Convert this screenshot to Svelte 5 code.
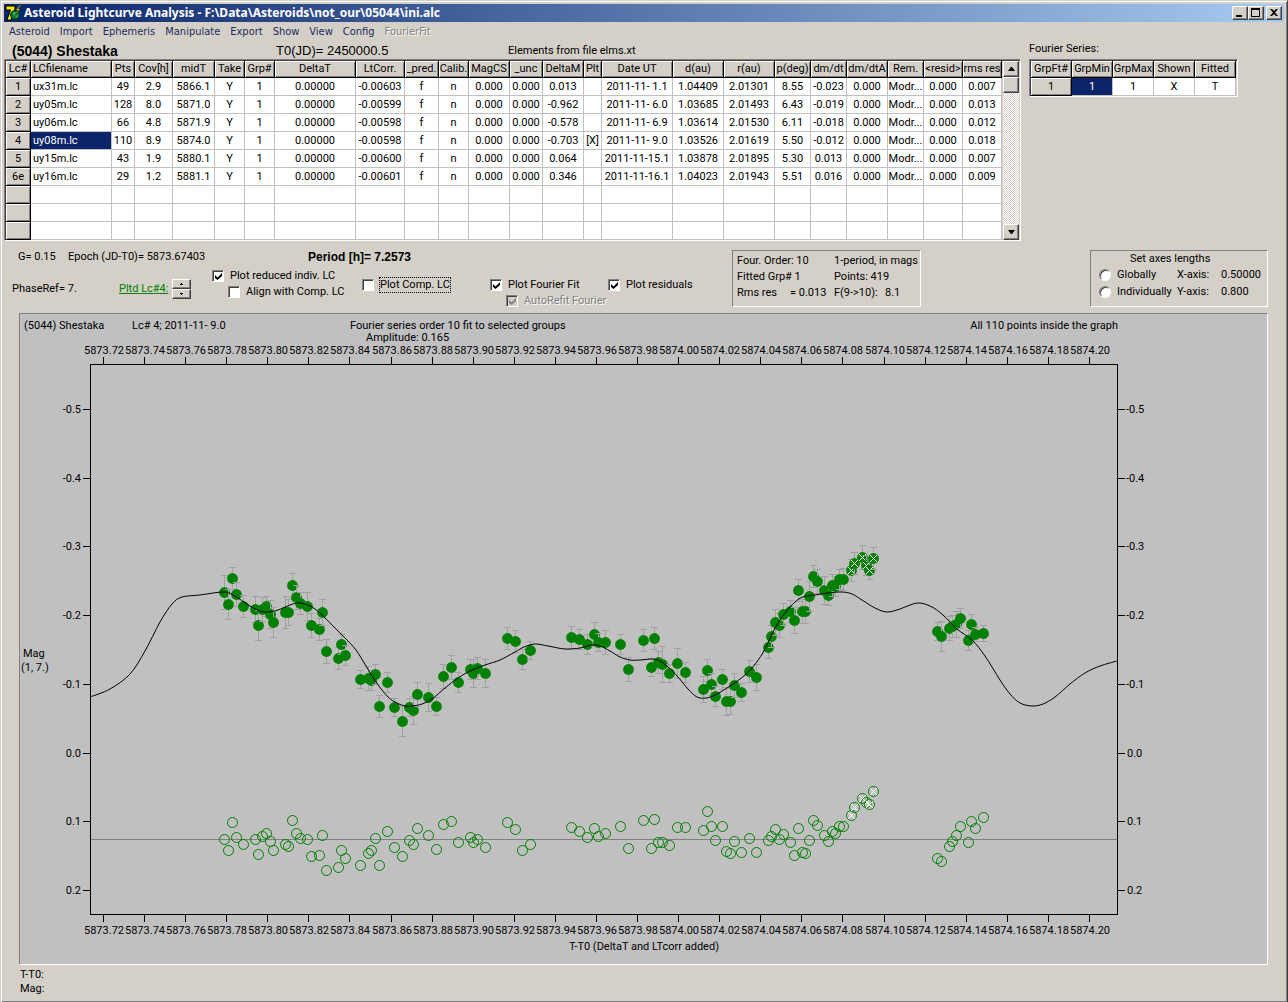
<script lang="ts">
  const menu = ['Asteroid', 'Import', 'Ephemeris', 'Manipulate', 'Export', 'Show', 'View', 'Config'];

  const columns: [string, number][] = [
    ['Lc#', 25], ['LCfilename', 81], ['Pts', 23], ['Cov[h]', 38], ['midT', 42], ['Take', 30],
    ['Grp#', 30], ['DeltaT', 81], ['LtCorr.', 49], ['_pred.', 34], ['Calib.', 30], ['MagCS', 41],
    ['_unc', 33], ['DeltaM', 41], ['Plt', 18], ['Date UT', 71], ['d(au)', 51], ['r(au)', 51],
    ['p(deg)', 36], ['dm/dt', 36], ['dm/dtA', 41], ['Rem.', 36], ['<resid>', 39], ['rms res', 39],
  ];

  const rows = [
    ['1', 'ux31m.lc', '49', '2.9', '5866.1', 'Y', '1', '0.00000', '-0.00603', 'f', 'n', '0.000', '0.000', '0.013', '', '2011-11- 1.1', '1.04409', '2.01301', '8.55', '-0.023', '0.000', 'Modr...', '0.000', '0.007'],
    ['2', 'uy05m.lc', '128', '8.0', '5871.0', 'Y', '1', '0.00000', '-0.00599', 'f', 'n', '0.000', '0.000', '-0.962', '', '2011-11- 6.0', '1.03685', '2.01493', '6.43', '-0.019', '0.000', 'Modr...', '0.000', '0.013'],
    ['3', 'uy06m.lc', '66', '4.8', '5871.9', 'Y', '1', '0.00000', '-0.00598', 'f', 'n', '0.000', '0.000', '-0.578', '', '2011-11- 6.9', '1.03614', '2.01530', '6.11', '-0.018', '0.000', 'Modr...', '0.000', '0.012'],
    ['4', 'uy08m.lc', '110', '8.9', '5874.0', 'Y', '1', '0.00000', '-0.00598', 'f', 'n', '0.000', '0.000', '-0.703', '[X]', '2011-11- 9.0', '1.03526', '2.01619', '5.50', '-0.012', '0.000', 'Modr...', '0.000', '0.018'],
    ['5', 'uy15m.lc', '43', '1.9', '5880.1', 'Y', '1', '0.00000', '-0.00600', 'f', 'n', '0.000', '0.000', '0.064', '', '2011-11-15.1', '1.03878', '2.01895', '5.30', '0.013', '0.000', 'Modr...', '0.000', '0.007'],
    ['6e', 'uy16m.lc', '29', '1.2', '5881.1', 'Y', '1', '0.00000', '-0.00601', 'f', 'n', '0.000', '0.000', '0.346', '', '2011-11-16.1', '1.04023', '2.01943', '5.51', '0.016', '0.000', 'Modr...', '0.000', '0.009'],
    ...Array.from({ length: 3 }, () => Array(24).fill('')),
  ];

  const fourierCols = ['GrpFt#', 'GrpMin', 'GrpMax', 'Shown', 'Fitted'];
  const fourierRow = ['1', '1', '1', 'X', 'T'];

  // x, magnitude y, error bar, residual y, 1 = rejected
  const points = [
    [224, 592, 17, 839], [228, 604, 15, 850], [232, 578, 11, 822], [236, 594, 12, 837], [243, 606, 11, 844],
    [255, 609, 13, 839], [258, 625, 15, 854], [262, 609, 12, 836], [266, 606, 10, 833], [270, 614, 14, 841],
    [273, 622, 15, 850], [285, 612, 16, 844], [288, 612, 13, 846], [292, 585, 12, 820], [296, 597, 12, 833],
    [300, 603, 11, 838], [307, 606, 14, 839], [311, 625, 12, 856], [319, 629, 11, 855], [322, 612, 13, 835],
    [326, 651, 12, 870], [338, 658, 11, 867], [341, 644, 10, 850], [345, 655, 10, 858], [360, 679, 9, 865],
    [368, 678, 12, 853], [371, 680, 10, 850], [375, 674, 10, 838], [379, 706, 11, 865], [387, 682, 10, 831],
    [394, 707, 9, 847], [402, 721, 15, 856], [409, 707, 9, 840], [413, 710, 14, 844], [417, 694, 12, 828],
    [428, 697, 14, 835], [436, 706, 9, 849], [443, 676, 12, 824], [451, 667, 12, 821], [458, 682, 10, 842],
    [470, 669, 10, 837], [473, 673, 14, 842], [477, 668, 11, 839], [485, 673, 14, 847], [507, 638, 11, 822],
    [515, 641, 11, 829], [522, 659, 10, 850], [530, 650, 9, 844], [571, 637, 11, 827], [579, 639, 10, 831],
    [587, 644, 10, 837], [594, 634, 12, 828], [598, 642, 9, 836], [605, 642, 12, 833], [620, 644, 10, 826],
    [628, 669, 12, 848], [643, 640, 11, 820], [651, 667, 9, 848], [654, 638, 11, 819], [658, 662, 11, 842],
    [662, 664, 18, 842], [669, 673, 9, 845], [677, 663, 15, 827], [685, 672, 10, 827], [703, 689, 13, 830],
    [707, 670, 11, 811], [711, 684, 11, 826], [715, 696, 10, 840], [722, 679, 10, 826], [726, 701, 14, 851],
    [730, 701, 13, 853], [734, 685, 12, 841], [741, 692, 9, 852], [749, 671, 11, 838], [756, 677, 13, 852],
    [768, 647, 11, 840], [771, 636, 11, 836], [775, 622, 13, 829], [779, 625, 12, 839], [783, 614, 11, 834],
    [790, 611, 11, 842], [794, 620, 13, 855], [798, 590, 11, 828], [802, 611, 12, 852], [805, 611, 12, 853],
    [809, 596, 15, 840], [813, 576, 11, 820], [817, 581, 12, 825], [824, 590, 14, 835], [828, 595, 10, 841],
    [832, 585, 11, 831], [835, 586, 10, 833], [839, 579, 10, 826], [843, 579, 11, 826], [851, 570, 11, 815, 1],
    [854, 563, 11, 807, 1], [862, 557, 12, 798, 1], [866, 565, 10, 802, 1], [869, 570, 9, 804, 1], [873, 558, 11, 791, 1],
    [937, 631, 9, 858], [941, 636, 15, 861], [949, 628, 12, 846], [952, 626, 11, 841], [956, 624, 13, 835],
    [960, 618, 10, 826], [968, 640, 10, 842], [971, 624, 10, 821], [975, 634, 7, 828], [983, 633, 8, 817],
  ];

  const fit = [
    [90, 697], [110, 689], [130, 674], [145, 651], [160, 622], [172, 604], [182, 597], [200, 595], [223, 592],
    [233, 595], [250, 606], [260, 611], [268, 612], [278, 610], [290, 605], [299, 603], [310, 606], [320, 613],
    [333, 626], [345, 638], [356, 650], [366, 666], [376, 682], [388, 697], [397, 703], [405, 706], [412, 706],
    [422, 704], [432, 699], [445, 688], [458, 678], [470, 671], [485, 665], [500, 660], [515, 652], [524, 647],
    [535, 644], [548, 646], [565, 649], [580, 648], [592, 645], [600, 646], [610, 651], [620, 657], [630, 660],
    [640, 660], [652, 659], [660, 661], [668, 667], [678, 677], [688, 689], [697, 697], [706, 698], [715, 695],
    [730, 686], [745, 675], [756, 663], [765, 649], [775, 628], [785, 613], [795, 602], [803, 597], [815, 595],
    [828, 593], [842, 592], [852, 594], [862, 600], [875, 608], [887, 612], [900, 609], [910, 605], [920, 603],
    [932, 607], [943, 615], [957, 629], [972, 640], [985, 656], [1000, 680], [1010, 694], [1020, 703],
    [1032, 706], [1043, 704], [1055, 697], [1070, 684], [1085, 673], [1100, 666], [1117, 661],
  ];

  function smooth(p: number[][]) {
    let d = `M${p[0]}`;
    for (let i = 0; i < p.length - 1; i++) {
      const a = p[i - 1] ?? p[i];
      const b = p[i];
      const c = p[i + 1];
      const e = p[i + 2] ?? c;
      d += `C${b[0] + (c[0] - a[0]) / 6},${b[1] + (c[1] - a[1]) / 6} ${c[0] - (e[0] - b[0]) / 6},${c[1] - (e[1] - b[1]) / 6} ${c}`;
    }
    return d;
  }

  const xTicks = Array.from({ length: 25 }, (_, i) => ({
    x: Math.round(103 + i * 41.08) + 0.5,
    label: (5873.72 + i * 0.02).toFixed(2),
  }));
  const yTicks = Array.from({ length: 8 }, (_, i) => ({
    y: Math.round(409 + i * 68.7) + 0.5,
    label: ((i - 5) / 10).toFixed(1),
  }));

  let plotReduced = $state(true);
  let alignComp = $state(false);
  let plotComp = $state(false);
  let plotFit = $state(true);
  let plotResiduals = $state(true);
  let axes = $state('');
</script>

<div class="window">
  <header class="titlebar">
    <svg class="logo" width="16" height="16" viewBox="0 0 16 16" aria-hidden="true">
      <path d="M1 1h9v3L6 15H2L5.500 5H1z" fill="#ffe800" stroke="#000" />
      <circle cx="10" cy="10" r="4.500" fill="#087830" stroke="#002800" />
      <path d="M8 8l2-1 1 2-2 2zM11 11l2-1-1 3z" fill="#48c878" />
      <path d="M15 0l-4 5h2l-3 5 5-6h-2l3-4z" fill="#f8f020" stroke="#304000" stroke-width=".5" />
    </svg>
    <h1>Asteroid Lightcurve Analysis - F:\Data\Asteroids\not_our\05044\ini.alc</h1>
    <div class="window-buttons">
      <button aria-label="Minimize"><svg width="12" height="10"><path d="M2 7h6v2H2z" /></svg></button>
      <button aria-label="Maximize"><svg width="12" height="10"><path d="M1 0h9v9H1zM2 2v6h7V2z" fill-rule="evenodd" /></svg></button>
      <button class="close" aria-label="Close"><svg width="12" height="10"><path d="M2 1h2l2 2 2-2h2L7 4.500 10 8H8L6 6 4 8H2l3-3.500z" /></svg></button>
    </div>
  </header>

  <nav>
    {#each menu as item}
      <button>{item}</button>
    {/each}
    <button disabled>FourierFit</button>
  </nav>

  <section class="tables">
    <div class="info">
      <strong>(5044) Shestaka</strong>
      <span class="t0">T0(JD)= 2450000.5</span>
      <span>Elements from file elms.xt</span>
    </div>
    <div class="series-title">Fourier Series:</div>

    <div class="grid-frame">
      <table>
        <colgroup>
          {#each columns as [, width]}
            <col style="width: {width}px" />
          {/each}
        </colgroup>
        <thead>
          <tr>
            {#each columns as [name], i}
              <th class:left={i === 1}>{name}</th>
            {/each}
          </tr>
        </thead>
        <tbody>
          {#each rows as row, r}
            <tr>
              {#each row as cell, i}
                {#if i === 0}
                  <th scope="row">{cell}</th>
                {:else}
                  <td class:left={i === 1} class:selected={i === 1 && r === 3}>{cell}</td>
                {/if}
              {/each}
            </tr>
          {/each}
        </tbody>
      </table>
      <div class="scrollbar">
        <button aria-label="Scroll up"><svg width="7" height="4"><path d="M3 0h1l3 4H0z" /></svg></button>
        <div class="thumb"></div>
        <div class="track"></div>
        <button aria-label="Scroll down"><svg width="7" height="4"><path d="M0 0h7L4 4H3z" /></svg></button>
      </div>
    </div>

    <div class="grid-frame">
      <table class="series">
        <thead>
          <tr>
            {#each fourierCols as name}
              <th>{name}</th>
            {/each}
          </tr>
        </thead>
        <tbody>
          <tr>
            {#each fourierRow as cell, i}
              {#if i === 0}
                <th scope="row">{cell}</th>
              {:else}
                <td class:selected={i === 1}>{cell}</td>
              {/if}
            {/each}
          </tr>
        </tbody>
      </table>
    </div>
  </section>

  <section class="controls">
    <div class="period">
      <span class="g">G= 0.15</span>
      <span class="epoch">Epoch (JD-T0)= 5873.67403</span>
      <strong>Period [h]= 7.2573</strong>
    </div>
    <div class="phase">
      <span>PhaseRef= 7.</span>
      <a href="#plot">Pltd Lc#4:</a>
      <div class="spinner">
        <button aria-label="Next lightcurve"><svg width="3" height="2"><path d="M1 0h1v1h1v1H0V1h1z" /></svg></button>
        <button aria-label="Previous lightcurve"><svg width="3" height="2"><path d="M0 0h3v1H2v1H1V1H0z" /></svg></button>
      </div>
    </div>
    <div class="checks first">
      <label><input type="checkbox" bind:checked={plotReduced} />Plot reduced indiv. LC</label>
      <label class="sub"><input type="checkbox" bind:checked={alignComp} />Align with Comp. LC</label>
    </div>
    <div class="checks">
      <label><input type="checkbox" bind:checked={plotComp} /><span class="focused">Plot Comp. LC</span></label>
    </div>
    <div class="checks">
      <label><input type="checkbox" bind:checked={plotFit} />Plot Fourier Fit</label>
      <label class="sub disabled"><input type="checkbox" checked disabled />AutoRefit Fourier</label>
    </div>
    <div class="checks">
      <label><input type="checkbox" bind:checked={plotResiduals} />Plot residuals</label>
    </div>
    <div class="panel stats">
      <span>Four. Order: 10</span><span>1-period, in mags</span>
      <span>Fitted Grp# 1</span><span>Points: 419</span>
      <span class="rms"><span>Rms res</span><span>= 0.013</span></span>
      <span class="ftest"><span>F(9-&gt;10):</span><span>8.1</span></span>
    </div>
    <div class="panel axes">
      <div class="axes-title">Set axes lengths</div>
      <label><input type="radio" name="axes" value="global" bind:group={axes} />Globally</label>
      <span>X-axis:</span><span>0.50000</span>
      <label><input type="radio" name="axes" value="individual" bind:group={axes} />Individually</label>
      <span>Y-axis:</span><span>0.800</span>
    </div>
  </section>

  <main class="plot" id="plot">
    <svg viewBox="20 314 1247 650" role="img" aria-label="Lightcurve of (5044) Shestaka">
      <text x="24" y="329">(5044) Shestaka</text>
      <text x="132" y="329">Lc# 4; 2011-11- 9.0</text>
      <text x="350" y="329">Fourier series order 10 fit to selected groups</text>
      <text x="366" y="341">Amplitude: 0.165</text>
      <text x="1118" y="329" text-anchor="end">All 110 points inside the graph</text>
      <text x="23" y="657">Mag</text>
      <text x="21" y="671">(1, 7.)</text>
      <text x="644" y="950" text-anchor="middle">T-T0 (DeltaT and LTcorr added)</text>

      <g class="axis">
        <path d="M90.500 364.500H1117.500V914.500H90.500z" />
        {#each xTicks as t}
          <path d="M{t.x} 357V364M{t.x} 915V922" />
        {/each}
        {#each yTicks as t}
          <path d="M83 {t.y}H90M1118 {t.y}H1125" />
        {/each}
      </g>
      {#each xTicks as t}
        <text x={t.x + 0.5} y="354" text-anchor="middle">{t.label}</text>
        <text x={t.x + 0.5} y="934" text-anchor="middle">{t.label}</text>
      {/each}
      {#each yTicks as t}
        <text x="81" y={t.y + 3.5} text-anchor="end">{t.label}</text>
        <text x={t.label[0] === '-' ? 1126 : 1127} y={t.y + 3.5}>{t.label}</text>
      {/each}

      {#if plotResiduals}
        <path class="zero" d="M91 839.500H1117" />
        {#each points as [x, , , res, rejected]}
          <circle class="residual" cx={x + 0.5} cy={res + 0.5} r="5" />
          {#if rejected}
            <path class="cross" d="M{x - 3} {res - 3}l7 7m0-7l-7 7" />
          {/if}
        {/each}
      {/if}

      {#if plotReduced}
        {#each points as [x, y, err, , rejected]}
          <path class="bar" d="M{x - 3} {y - err + 0.5}h7m-3.500 0v{err * 2}m-3.500 0h7" />
          <circle class="point" cx={x + 0.5} cy={y + 0.5} r="5.400" />
          {#if rejected}
            <path class="cross" d="M{x - 3} {y - 3}l7 7m0-7l-7 7" />
          {/if}
        {/each}
      {/if}
      {#if plotFit}
        <path class="fit" d={smooth(fit)} />
      {/if}
    </svg>
  </main>

  <footer>
    <div>T-T0:</div>
    <div>Mag:</div>
  </footer>
</div>

<style>
  :global(body) {
    margin: 0;
    background: #d4d0c8;
  }

  .window {
    box-sizing: border-box;
    min-height: 100vh;
    padding: 3px;
    border: 1px solid;
    border-color: #d4d0c8 #404040 #404040 #d4d0c8;
    box-shadow: inset 1px 1px #fff, inset -1px -1px #808080;
    background: #d4d0c8;
    color: #000;
    font: 11px/14px Roboto, "Liberation Sans", Arial, sans-serif;
    white-space: nowrap;
  }

  button {
    padding: 0;
    font: inherit;
    color: inherit;
  }

  .titlebar {
    display: flex;
    align-items: center;
    height: 18px;
    padding: 0 2px 0 1px;
    gap: 3px;
    background: linear-gradient(to right, #0a246a, #a6caf0);
    color: #fff;
  }

  h1 {
    flex: 1;
    margin: 0;
    font: bold 12px/18px "Noto Sans", sans-serif;
  }

  .window-buttons {
    display: flex;
  }

  .window-buttons button,
  .scrollbar button,
  .spinner button {
    display: flex;
    align-items: center;
    justify-content: center;
    border: 1px solid;
    border-color: #fff #404040 #404040 #fff;
    box-shadow: inset -1px -1px #808080;
    background: #d4d0c8;
  }

  .window-buttons button {
    width: 16px;
    height: 14px;
  }

  .window-buttons .close {
    margin-left: 2px;
  }

  nav {
    display: flex;
    gap: 10px;
    height: 20px;
    padding-left: 5px;
  }

  nav button {
    border: 0;
    background: none;
    color: #1c2c5c;
    font: 11px/20px "DejaVu Sans Condensed", "DejaVu Sans", sans-serif;
  }

  nav button:disabled {
    color: #808080;
    text-shadow: 1px 1px #fff;
  }

  .tables {
    display: grid;
    grid-template-columns: max-content 1fr;
    column-gap: 8px;
    align-items: start;
    justify-items: start;
  }

  .info {
    display: grid;
    grid-template-columns: 264px 232px auto;
    align-items: center;
    height: 17px;
    padding-left: 8px;
  }

  .info strong {
    font: bold 14px/14px "Liberation Sans", Arial, sans-serif;
  }

  .t0 {
    font: 13px/14px "Liberation Sans", Arial, sans-serif;
  }

  .series-title {
    line-height: 14px;
  }

  .grid-frame {
    display: flex;
    gap: 1px;
    border: 1px solid;
    border-color: #808080 #fff #fff #808080;
    padding: 1px 1px 0;
    box-shadow: inset 1px 1px #404040;
  }

  table {
    width: 996px;
    table-layout: fixed;
    border-spacing: 0;
    background: #fff;
  }

  .series {
    width: 205px;
  }

  th,
  td {
    box-sizing: border-box;
    height: 18px;
    padding: 0;
    border: solid #c0c0c0;
    border-width: 0 1px 1px 0;
    font-weight: normal;
    line-height: 14px;
    text-align: center;
    overflow: hidden;
  }

  th {
    border-color: #000;
    background: #d4d0c8;
    box-shadow: inset 1px 1px #fff, inset -1px -1px #808080;
  }

  thead th {
    height: 17px;
  }

  .left {
    padding-left: 2px;
    text-align: left;
  }

  .selected {
    background: #0a246a;
    color: #fff;
  }

  .scrollbar {
    display: flex;
    flex-direction: column;
    width: 16px;
    background: #eae8e4;
  }

  .scrollbar button {
    height: 16px;
  }

  .thumb {
    height: 14px;
    border: 1px solid;
    border-color: #fff #404040 #404040 #fff;
    box-shadow: inset -1px -1px #808080;
    background: #d4d0c8;
  }

  .track {
    flex: 1;
    background: repeating-conic-gradient(#fff 0 25%, #d4d0c8 0 50%) 0 0 / 2px 2px;
  }

  .controls {
    display: grid;
    grid-template-columns: 208px 150px 128px 118px 124px 189px 1fr;
    grid-template-rows: 16px 48px;
    padding: 8px 16px 0 0;
  }

  .period {
    grid-column: 1 / 4;
    display: flex;
    align-items: center;
  }

  .period .g {
    width: 50px;
    padding-left: 14px;
  }

  .epoch {
    width: 240px;
  }

  .period strong {
    font: bold 12px/14px "Liberation Sans", Arial, sans-serif;
  }

  .phase,
  .checks {
    grid-row: 2;
  }

  .phase {
    display: grid;
    grid-template-columns: 107px 53px 19px;
    align-items: center;
    padding-left: 8px;
  }

  .phase a {
    color: #008000;
  }

  .spinner button {
    width: 19px;
    height: 10px;
  }

  .checks {
    padding-top: 12px;
  }

  .checks.first {
    padding-top: 3px;
  }

  label {
    display: flex;
    align-items: center;
    gap: 6px;
    height: 16px;
  }

  .sub {
    padding-left: 16px;
  }

  .disabled {
    color: #808080;
    text-shadow: 1px 1px #fff;
  }

  .focused {
    outline: 1px dotted #000;
  }

  input {
    box-sizing: border-box;
    appearance: none;
    flex: none;
    width: 12px;
    height: 12px;
    margin: 0;
    border: 1px solid;
    border-color: #808080 #fff #fff #808080;
    box-shadow: inset 1px 1px #404040;
    background: #fff;
  }

  input[type='checkbox']:checked::before {
    content: '';
    display: block;
    width: 7px;
    height: 7px;
    margin: 2px 0 0 2px;
    background: #000;
    clip-path: polygon(0 29%, 36% 64%, 100% 0, 100% 43%, 36% 100%, 0 71%);
  }

  input[type='checkbox']:disabled {
    background: #d4d0c8;
  }

  input[type='checkbox']:disabled::before {
    background: #808080;
  }

  input[type='radio'] {
    border-radius: 50%;
  }

  input[type='radio']:checked {
    background: radial-gradient(#000 2px, #fff 3px);
  }

  .panel {
    grid-row: 1 / 3;
    box-sizing: border-box;
    height: 57px;
    border: 1px solid;
    border-color: #808080 #fff #fff #808080;
    margin-top: 1px;
  }

  .stats {
    grid-column: 6;
    display: grid;
    grid-template-columns: 97px 1fr;
    grid-auto-rows: 16px;
    padding: 3px 4px;
  }

  .rms,
  .ftest {
    display: grid;
    grid-template-columns: 53px auto;
  }

  .ftest {
    grid-template-columns: 51px auto;
  }

  .axes {
    grid-column: 7;
    justify-self: end;
    display: grid;
    grid-template-columns: 78px 44px 46px;
    grid-template-rows: 15px 17px 17px;
    align-items: center;
    padding-left: 8px;
  }

  .axes-title {
    grid-column: 1 / 4;
    padding-left: 31px;
  }

  .plot {
    margin: 0 16px 0 15px;
    border: 1px solid;
    border-color: #808080 #fff #fff #808080;
    background: #c0c0c0;
  }

  .plot svg {
    display: block;
    width: 100%;
    height: auto;
  }

  .axis path,
  .fit,
  .zero,
  .bar,
  .residual,
  .cross {
    fill: none;
    stroke: #000;
  }

  .axis path,
  .zero,
  .bar {
    shape-rendering: crispEdges;
  }

  .zero {
    stroke: #808080;
  }

  .bar {
    stroke: #a0a0a0;
  }

  .point {
    fill: #008000;
  }

  .residual {
    stroke: #008000;
  }

  .cross {
    stroke: #fff;
  }

  footer {
    padding: 3px 16px;
  }
</style>
